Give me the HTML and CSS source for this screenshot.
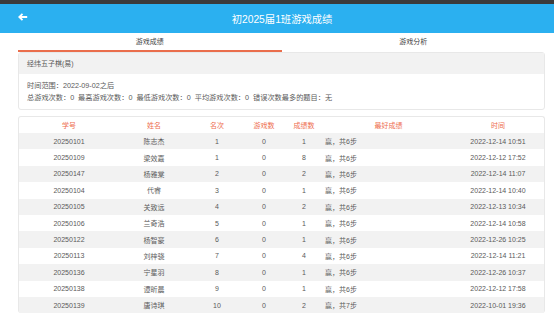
FILE: index.html
```html
<!DOCTYPE html>
<html lang="zh">
<head>
    <meta charset="UTF-8">
    <title>初2025届1班游戏成绩</title>
    <link rel="stylesheet" href="styles.css">
</head>
<body>

    <div class="topstrip"></div>

    <header class="navbar">
        <span class="back">
            <svg width="10" height="8" viewBox="0 0 10 8">
                <path d="M4.5 0.8 L1.2 4 L4.5 7.2 M1.4 4 H9.2" fill="none" stroke="#fff" stroke-width="1.8"/>
            </svg>
        </span>
        <h1 class="title">初2025届1班游戏成绩</h1>
        <span></span>
    </header>

    <div class="wrap">
        <div class="tabs">
            <div class="tab active">游戏成绩</div>
            <div class="tab">游戏分析</div>
        </div>

        <div class="card">
            <div class="card-head">经纬五子棋(易)</div>
            <div class="card-body">
                <p>时间范围：2022-09-02之后</p>
                <p>总游戏次数：0&nbsp; 最高游戏次数：0&nbsp; 最低游戏次数：0&nbsp; 平均游戏次数：0&nbsp; 错误次数最多的题目：无</p>
            </div>
        </div>

        <div class="card table-card">
            <table id="scoreTable">
                <colgroup>
                    <col style="width:100px">
                    <col style="width:70px">
                    <col style="width:56px">
                    <col style="width:38px">
                    <col style="width:42px">
                    <col style="width:127px">
                    <col>
                </colgroup>
                <thead>
                    <tr>
                        <th>学号</th>
                        <th>姓名</th>
                        <th>名次</th>
                        <th>游戏数</th>
                        <th>成绩数</th>
                        <th>最好成绩</th>
                        <th>时间</th>
                    </tr>
                </thead>
                <tbody>
                    <!-- rows filled by script -->
                </tbody>
            </table>
        </div>
    </div>

    <script>
        const rows = [
            ["20250101", "陈志杰", 1, 0, 1, "赢，共6步", "2022-12-14 10:51"],
            ["20250109", "梁效嘉", 1, 0, 8, "赢，共6步", "2022-12-12 17:52"],
            ["20250147", "杨雅棠", 2, 0, 2, "赢，共6步", "2022-12-14 11:07"],
            ["20250104", "代睿", 3, 0, 1, "赢，共6步", "2022-12-14 10:40"],
            ["20250105", "关致远", 4, 0, 2, "赢，共6步", "2022-12-13 10:34"],
            ["20250106", "兰奇浩", 5, 0, 1, "赢，共6步", "2022-12-14 10:58"],
            ["20250122", "杨智豪", 6, 0, 1, "赢，共6步", "2022-12-26 10:25"],
            ["20250113", "刘梓骁", 7, 0, 4, "赢，共6步", "2022-12-14 11:21"],
            ["20250136", "宁星羽", 8, 0, 1, "赢，共6步", "2022-12-26 10:37"],
            ["20250138", "谭昕晨", 9, 0, 1, "赢，共6步", "2022-12-12 17:58"],
            ["20250139", "唐诗琪", 10, 0, 2, "赢，共7步", "2022-10-01 19:36"]
        ];

        const tbody = document.querySelector("#scoreTable tbody");
        rows.forEach(r => {
            tbody.innerHTML += `
                <tr>
                    <td>${r[0]}</td>
                    <td>${r[1]}</td>
                    <td>${r[2]}</td>
                    <td>${r[3]}</td>
                    <td>${r[4]}</td>
                    <td class="best">${r[5]}</td>
                    <td>${r[6]}</td>
                </tr>
            `;
        });
    </script>

</body>
</html>
```

FILE: styles.css
```css
body {
    margin: 0;
    font-family: "Liberation Sans", "Noto Sans CJK SC", sans-serif;
    font-size: 7px;
    color: #5a5a5a;
    background: #fff;
}
.topstrip {
    height: 4px;
    background: #3b3b3b;
}
.navbar {
    height: 29px;
    background: #2bb0f0;
    display: grid;
    grid-template-columns: 40px 1fr 40px;
    align-items: center;
}
.back {
    display: flex;
    padding-left: 18px;
    margin-top: -4px;
}
.title {
    margin: 0;
    padding-left: 10px;
    text-align: center;
    font-size: 10.3px;
    font-weight: normal;
    color: #fff;
}
.wrap {
    margin: 0 9px 0 18px;
}
.tabs {
    display: flex;
    height: 19px;
}
.tab {
    flex: 1;
    text-align: center;
    line-height: 17px;
    color: #444;
}
.tab.active {
    border-bottom: 2px solid #ea6e4c;
}
.card {
    border: 1px solid #e8e8e8;
    border-radius: 3px;
    background: #fff;
}
.card-head {
    height: 21px;
    line-height: 21px;
    padding-left: 8px;
    background: #f2f2f2;
}
.card-body {
    padding: 6px 8px 5px;
    font-size: 7.2px;
}
.card-body p {
    margin: 0;
    line-height: 12px;
}
.table-card {
    margin-top: 6px;
    border-bottom: none;
}
table {
    width: 100%;
    border-collapse: collapse;
    table-layout: fixed;
}
th, td {
    padding: 0;
    text-align: center;
    font-weight: normal;
}
th {
    height: 16px;
    color: #ee6e4f;
}
td {
    height: 16.4px;
}
td.best {
    text-align: left;
}
tbody tr:nth-child(odd) {
    background: #f2f2f2;
}
```
